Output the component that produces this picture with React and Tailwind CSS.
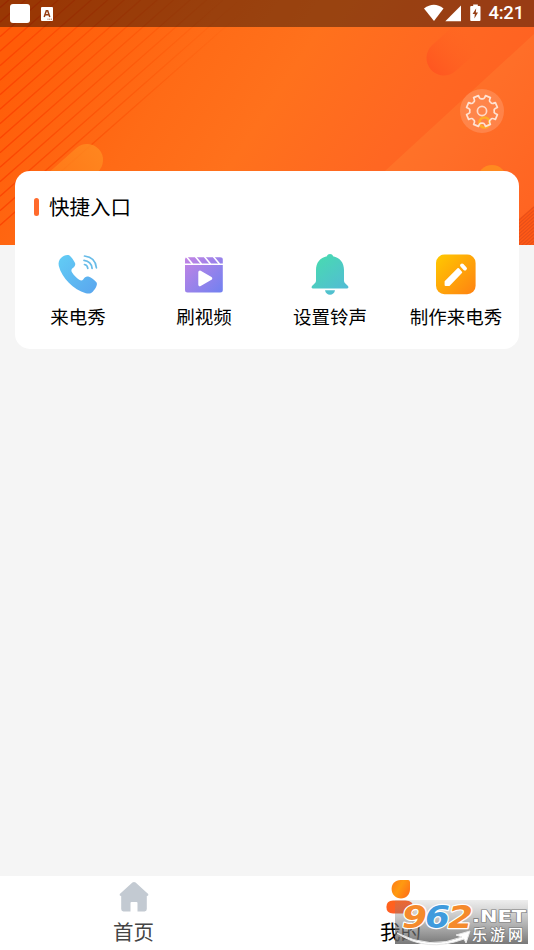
const cjk = "font-['Noto_Sans_CJK_SC',sans-serif]";

// Eight teeth, with a rounded notch between each pair
function gearPath(outer, inner) {
	const at = (r, deg) => {
		const a = (deg * Math.PI) / 180;
		return `${(r * Math.cos(a)).toFixed(2)} ${(r * Math.sin(a)).toFixed(2)}`;
	};
	let d = `M${at(outer, 13)}`;
	for (let k = 0; k < 8; k++) {
		const a = k * 45;
		d += `L${at(outer, a + 32)}`;
		d += `C${at(inner, a + 34)} ${at(inner - 0.5, a + 39)} ${at(inner, a + 45)}`;
		d += `C${at(inner - 0.5, a + 51)} ${at(inner, a + 56)} ${at(outer, a + 58)}`;
	}
	return d + "Z";
}

function Banner() {
	return (
		<svg className="absolute inset-0" width="534" height="245" viewBox="0 0 534 245">
			<defs>
				<linearGradient id="base" x1="0" y1="0.3" x2="1" y2="0.6">
					<stop offset="0" stopColor="#ff5c08" />
					<stop offset="0.3" stopColor="#ff6b16" />
					<stop offset="0.5" stopColor="#ff711c" />
					<stop offset="0.75" stopColor="#ff6722" />
					<stop offset="1" stopColor="#ff5f22" />
				</linearGradient>
				<linearGradient id="sheet" x1="0" y1="0" x2="1" y2="1">
					<stop offset="0" stopColor="#ff7a28" />
					<stop offset="0.5" stopColor="#ff6e28" />
					<stop offset="1" stopColor="#ff6220" />
				</linearGradient>
				<linearGradient id="line" gradientUnits="userSpaceOnUse" x1="0" y1="0" x2="250" y2="0">
					<stop offset="0" stopColor="#fb4000" stopOpacity="0.85" />
					<stop offset="0.45" stopColor="#fa4800" stopOpacity="0.5" />
					<stop offset="1" stopColor="#fa5000" stopOpacity="0" />
				</linearGradient>
				<linearGradient id="pill" gradientUnits="userSpaceOnUse" x1="98" y1="150" x2="52" y2="190">
					<stop offset="0" stopColor="#ff8a20" />
					<stop offset="1" stopColor="#ff7a18" />
				</linearGradient>
				<linearGradient id="shade" gradientUnits="userSpaceOnUse" x1="430" y1="70" x2="470" y2="36">
					<stop offset="0" stopColor="#ff5620" />
					<stop offset="1" stopColor="#ff6422" stopOpacity="0" />
				</linearGradient>
			</defs>
			<rect width="534" height="245" fill="url(#base)" />
			<path d="M534 34L385 171V245H534Z" fill="url(#sheet)" />
			<path d="M444 58L484 22" stroke="url(#shade)" strokeWidth="35" strokeLinecap="round" />
			<g stroke="url(#line)" strokeWidth="1.3">
				{Array.from({ length: 16 }, (_, i) => (
					<path key={i} d={`M0 ${7.7 + i * 14.5}L300 ${7.7 + i * 14.5 - 264}`} />
				))}
			</g>
			<path d="M87 160L50 193" stroke="url(#pill)" strokeOpacity="0.85" strokeWidth="32" strokeLinecap="round" />
			<circle cx="492" cy="180" r="15" fill="#ff8a20" />
			<path d="M534 206L519 219V245H534Z" fill="#ff5a16" />
			<g stroke="#e8501a" strokeWidth="1.2">
				{Array.from({ length: 12 }, (_, i) => (
					<path key={i} d={`M517 ${222 + i * 3.4}L534 ${207 + i * 3.4}`} />
				))}
			</g>
		</svg>
	);
}

function StatusBar() {
	return (
		<div className="relative flex h-[27px] items-center bg-black/40 px-[10px] text-white">
			<div className="h-[19px] w-[20px] rounded-[3px] bg-white" />
			<svg className="ml-[11px]" width="12" height="14" viewBox="0 0 12 14">
				<rect width="12" height="14" rx="1" fill="#fff" />
				<path d="M3.2 10L5.3 3.8H6.7L8.8 10M4.2 7.8H7.8" stroke="#963e14" strokeWidth="1.5" fill="none" />
				<path d="M6.5 12.2H11" stroke="#963e14" strokeWidth="0.8" strokeDasharray="1 0.7" />
			</svg>
			<svg className="mr-px ml-auto -translate-y-px" width="58" height="18" viewBox="0 0 58 18" fill="#fff">
				<path d="M0 4.5Q10 -3 19.5 4.5L10 17Z" />
				<path d="M37 1.5V17.2H21.3Z" />
				<path d="M49.2 0.5H53.8V2H55.5Q56.5 2 56.5 3V16Q56.5 17 55.5 17H47.2Q46.2 17 46.2 16V3Q46.2 2 47.2 2H49.2Z" />
				<path d="M52.2 4.2L48.6 10H50.8L50.4 14.6L54 8.6H51.8Z" fill="#963e14" />
			</svg>
			<span className="ml-[5px] font-[Roboto,sans-serif] text-[18.5px] leading-[29px] font-medium tracking-[-0.2px]">4:21</span>
		</div>
	);
}

function SettingsButton() {
	return (
		<button className="block size-[46px]">
			<svg width="46" height="46" viewBox="-23 -23 46 46" fill="none">
				<circle r="22" fill="#fff" fillOpacity="0.16" />
				<circle cx="2.5" cy="11.5" r="5" stroke="#ffad28" strokeWidth="2.6" />
				<path d={gearPath(15.8, 12.3)} stroke="#ffe2d2" strokeWidth="1.7" strokeLinejoin="round" />
				<circle r="4.6" stroke="#ffd9c6" strokeWidth="1.7" />
			</svg>
		</button>
	);
}

function PhoneIcon() {
	return (
		<svg width="42" height="42" viewBox="0 0 42 42" fill="none">
			<defs>
				<linearGradient id="phone" x1="0" y1="0" x2="1" y2="1">
					<stop offset="0" stopColor="#62cdf5" />
					<stop offset="1" stopColor="#5aa5ee" />
				</linearGradient>
			</defs>
			<path
				d="M4 5C6.4 2.4 9.6 1.4 12.2 2.2C14.2 3.6 17 7.6 18.2 10.4C18.6 12.2 17.4 13.8 15.8 15C14.2 16.3 14 17.8 15.1 19.6C17.2 22.8 19.4 24.8 22.2 26.8C24 28 25.2 27.8 26.4 26.2C27.8 24 29.4 23 31.4 23.6C34.4 24.6 37.8 27.4 39.6 29.6C40.8 31.8 38.6 35.8 36 38.4C33.8 40.5 31.8 41 28.8 40.2C16.6 36.8 4.8 24.8 1.8 13C1.1 9.6 2 7 4 5Z"
				fill="url(#phone)"
			/>
			<g stroke="#68bce8" strokeWidth="1.7" strokeLinecap="round">
				<path d="M27.5 11.5Q30.5 12.2 30.8 15.4" />
				<path d="M27 7.3Q34.3 8.1 35.1 15.4" />
				<path d="M27.5 3Q38.6 4.4 39.4 14.8" />
			</g>
		</svg>
	);
}

function VideoIcon() {
	return (
		<svg width="42" height="42" viewBox="0 0 42 42">
			<defs>
				<linearGradient id="video" gradientUnits="userSpaceOnUse" x1="4" y1="4" x2="38" y2="38">
					<stop offset="0" stopColor="#c184e4" />
					<stop offset="1" stopColor="#7481f0" />
				</linearGradient>
			</defs>
			<path d="M4 4.2H37Q39.8 4.2 39.8 6.6V10.6H2V6.6Q2 4.2 4 4.2Z" fill="url(#video)" />
			<path d="M2 12H39.8V37Q39.8 39.5 37.2 39.5H4.5Q2 39.5 2 37Z" fill="url(#video)" />
			<path d="M3.5 3.8L9.5 11M12.5 3.8L18.5 11M21.5 3.8L27.5 11M30.5 3.8L36.5 11" stroke="#fff" strokeWidth="1.6" />
			<path d="M16.9 19.2L27.7 25.4L16.9 31.6Z" fill="#fff" stroke="#fff" strokeWidth="3.2" strokeLinejoin="round" />
		</svg>
	);
}

function BellIcon() {
	return (
		<svg width="42" height="42" viewBox="0 0 42 42">
			<defs>
				<linearGradient id="bell" gradientUnits="userSpaceOnUse" x1="8" y1="6" x2="34" y2="38">
					<stop offset="0" stopColor="#49d9b2" />
					<stop offset="1" stopColor="#52bcd4" />
				</linearGradient>
			</defs>
			<path
				d="M18 3.3C18.2 1.9 19.3 1 21 1S23.8 1.9 24 3.3C31 4.5 35 10 35 17V27.5C35 29.4 36 30.3 37.4 31.4L39 33C39.8 34.2 39.4 35.6 38 35.6H4C2.6 35.6 2.2 34.2 3 33L4.6 31.4C6 30.3 7 29.4 7 27.5V17C7 10 11 4.5 18 3.3Z"
				fill="url(#bell)"
			/>
			<path d="M16 37.2H26C25.5 40 23.4 41.8 21 41.8S16.5 40 16 37.2Z" fill="url(#bell)" />
		</svg>
	);
}

function EditIcon() {
	return (
		<svg width="42" height="42" viewBox="0 0 42 42">
			<defs>
				<linearGradient id="edit" x1="0" y1="0" x2="1" y2="1">
					<stop offset="0" stopColor="#ffc900" />
					<stop offset="1" stopColor="#ff8212" />
				</linearGradient>
			</defs>
			<rect x="1" y="1.6" width="39.6" height="39.6" rx="8.5" fill="url(#edit)" />
			<path
				d="M10.6 28.6L23.2 16L26.2 19.4L14 32H10.6Z"
				fill="#fff"
				stroke="#fff"
				strokeWidth="2"
				strokeLinejoin="round"
			/>
			<path d="M27 12.4L30 15.6" stroke="#fff" strokeWidth="3.8" strokeLinecap="round" />
		</svg>
	);
}

const shortcuts = [
	{ label: "来电秀", icon: PhoneIcon },
	{ label: "刷视频", icon: VideoIcon },
	{ label: "设置铃声", icon: BellIcon },
	{ label: "制作来电秀", icon: EditIcon },
];

function Shortcuts() {
	return (
		<section className="relative mx-[15px] mt-[37px] h-[178px] rounded-[15px] bg-white">
			<div className="flex items-center pt-[21px] pl-[19px]">
				<span className="h-[18px] w-[5px] rounded-full bg-[#ff6a2c]" />
				<h2 className="-mt-px ml-[10px] text-[20.5px] leading-[30px] text-black">快捷入口</h2>
			</div>
			<div className="mt-[32px] grid grid-cols-4">
				{shortcuts.map(({ label, icon: Icon }) => (
					<div key={label} className="flex flex-col items-center">
						<Icon />
						<span className="mt-[8px] text-[18.5px] leading-[26px] whitespace-nowrap text-black">{label}</span>
					</div>
				))}
			</div>
		</section>
	);
}

function TabBar() {
	return (
		<nav className="grid h-[74px] grid-cols-2 bg-white">
			<div className="flex flex-col items-center pt-[5px]">
				<svg width="30" height="32" viewBox="0 0 30 32">
					<path
						d="M13.4 1.6Q15 .2 16.6 1.6L29.2 13Q30 14.6 28.2 15H27.8V28Q27.8 30.4 25.6 30.4H18.5V22Q18.5 21 17.5 21H12.5Q11.5 21 11.5 22V30.4H4.4Q2.2 30.4 2.2 28V15H1.8Q0 14.6 .8 13Z"
						fill="#c3cad2"
					/>
				</svg>
				<span className="mt-[3px] text-[20.5px] leading-[30px] text-[#444]">首页</span>
			</div>
			<div className="flex flex-col items-center pt-[3px]">
				<svg width="30" height="36" viewBox="0 0 30 36">
					<defs>
						<linearGradient id="head" x1="0" y1="0" x2="1" y2="0.6">
							<stop offset="0" stopColor="#ff7a18" />
							<stop offset="0.5" stopColor="#ff9a10" />
							<stop offset="1" stopColor="#ff7518" />
						</linearGradient>
						<linearGradient id="body" x1="0" y1="0" x2="1" y2="1">
							<stop offset="0" stopColor="#ff6418" />
							<stop offset="1" stopColor="#ff5a30" />
						</linearGradient>
					</defs>
					<path d="M14.5 1H22.2Q24 1 24 3V10C24 15.6 20.2 19.5 15 19.5S5.6 15.4 5.6 10S9.4 1 14.5 1Z" fill="url(#head)" />
					<path d="M7 21.5H19.5Q27.5 21.5 27.5 29V32Q27.5 34.4 25.5 34.4H7Q.4 34.4 .4 28T7 21.5Z" fill="url(#body)" />
				</svg>
				<span className="mt-px text-[20.5px] leading-[30px] text-black">我的</span>
			</div>
		</nav>
	);
}

const digits = [
	{ text: "9", x: 402, color: "#f58a2c" },
	{ text: "6", x: 425, color: "#3f9bdd" },
	{ text: "2", x: 448, color: "#f58a2c" },
];

function Watermark() {
	return (
		<svg className="absolute right-[6px] bottom-[6px] overflow-visible" width="133" height="44" viewBox="395 900 133 44">
			<defs>
				<linearGradient id="veil" x1="0" y1="0" x2="0" y2="1">
					<stop offset="0" stopColor="#888" stopOpacity="0.15" />
					<stop offset="1" stopColor="#666" stopOpacity="0.88" />
				</linearGradient>
			</defs>
			<rect x="395" y="900" width="133" height="44" fill="url(#veil)" />
			<path d="M397 933Q430 950 462 937L456 935L470 931L466 943L464 939Q426 953 397 933Z" fill="#fff" stroke="#e8e8e8" />
			{digits.map((d) => (
				<text
					key={d.text}
					x={d.x}
					y="927.5"
					fontFamily="DejaVu Sans"
					fontSize="32"
					fontWeight="bold"
					fontStyle="italic"
					textLength="25"
					lengthAdjust="spacingAndGlyphs"
					fill={d.color}
					stroke="#fff"
					strokeWidth="2.4"
					paintOrder="stroke"
					strokeLinejoin="round"
				>
					{d.text}
				</text>
			))}
			<g fill="#fff" stroke="#777" strokeWidth="1.2" paintOrder="stroke">
				<text x="472" y="921.5" fontFamily="DejaVu Sans" fontSize="16" fontWeight="bold" textLength="54" lengthAdjust="spacingAndGlyphs">
					.NET
				</text>
				<text x="472" y="939.5" fontFamily="Noto Sans CJK SC" fontSize="15" fontWeight="500" textLength="51">
					乐游网
				</text>
			</g>
		</svg>
	);
}

export default function App() {
	return (
		<div className={`relative flex h-[950px] w-[534px] flex-col overflow-hidden bg-[#f5f5f5] ${cjk}`}>
			<Banner />
			<StatusBar />
			<header className="relative flex h-[107px] justify-end pt-[61px] pr-[29px]">
				<SettingsButton />
			</header>
			<main className="flex-1">
				<Shortcuts />
			</main>
			<TabBar />
			<Watermark />
		</div>
	);
}
